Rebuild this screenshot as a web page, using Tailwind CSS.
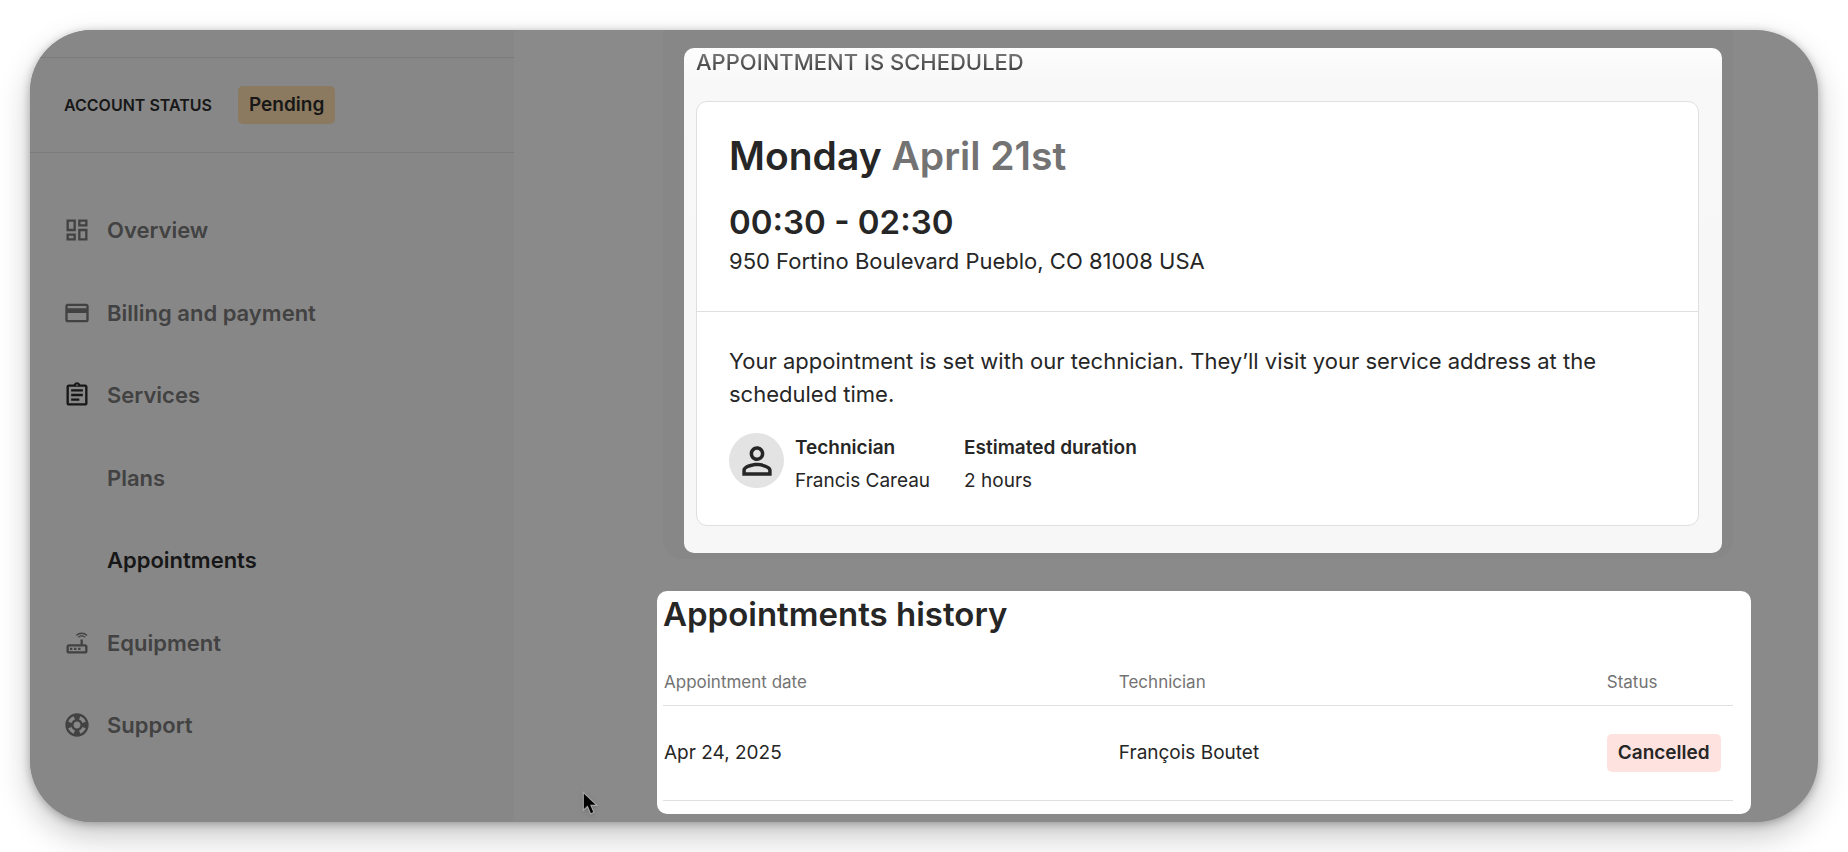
<!DOCTYPE html>
<html lang="en">
<head>
<meta charset="utf-8">
<meta name="viewport" content="width=device-width, initial-scale=1">
<title>Appointments</title>
<script src="https://cdn.jsdelivr.net/npm/@tailwindcss/browser@4"></script>
</head>
<body class="bg-white font-['Inter',sans-serif] text-[#262626]">
<div class="flex min-h-screen p-[30px]">
  <div class="relative flex flex-1 overflow-hidden rounded-[62px] bg-[#8a8a8a] shadow-[0_14px_32px_rgba(0,0,0,0.22),0_2px_10px_rgba(0,0,0,0.28)]">

    <aside class="flex w-[484px] shrink-0 flex-col bg-[#878787] pt-[27px]">
      <div class="flex items-center gap-[26px] border-y border-[#7b7b7b] px-[34px] py-7 text-[#171717]">
        <span class="text-base font-semibold">ACCOUNT STATUS</span>
        <span class="rounded-[5px] bg-[#8b7a60] px-[11px] text-[19px] leading-[38px] font-semibold">Pending</span>
      </div>
      <nav class="flex flex-1 flex-col justify-between px-[33px] pt-[61px] pb-[81px] text-[22px] leading-8 font-semibold text-[#424242]">
        <a href="#" class="flex items-center gap-4">
          <svg class="size-7" viewBox="0 0 24 24" fill="currentColor" aria-hidden="true"><path d="M19 5v2h-4V5h4M9 5v6H5V5h4m10 8v6h-4v-6h4M9 17v2H5v-2h4M21 3h-8v6h8V3zM11 3H3v10h8V3zm10 8h-8v10h8V11zm-10 4H3v6h8v-6z"/></svg>
          Overview
        </a>
        <a href="#" class="flex items-center gap-4">
          <svg class="size-7" viewBox="0 0 24 24" fill="currentColor" aria-hidden="true"><path d="M20 4H4c-1.11 0-1.99.89-1.99 2L2 18c0 1.11.89 2 2 2h16c1.11 0 2-.89 2-2V6c0-1.11-.89-2-2-2zm0 14H4v-6h16v6zm0-10H4V6h16v2z"/></svg>
          Billing and payment
        </a>
        <a href="#" class="flex items-center gap-4">
          <svg class="size-7 text-[#171717]" viewBox="0 0 24 24" fill="currentColor" aria-hidden="true"><path d="M7 15h7v2H7zm0-4h10v2H7zm0-4h10v2H7zm12-4h-4.18C14.4 1.84 13.3 1 12 1c-1.3 0-2.4.84-2.82 2H5c-1.1 0-2 .9-2 2v14c0 1.1.9 2 2 2h14c1.1 0 2-.9 2-2V5c0-1.1-.9-2-2-2zm-7-.25c.41 0 .75.34.75.75s-.34.75-.75.75-.75-.34-.75-.75.34-.75.75-.75zM19 19H5V5h14v14z"/></svg>
          Services
        </a>
        <a href="#" class="pl-11">Plans</a>
        <a href="#" class="pl-11 text-[#171717]" aria-current="page">Appointments</a>
        <a href="#" class="flex items-center gap-4">
          <svg class="size-7" viewBox="0 0 24 24" fill="currentColor" aria-hidden="true"><path d="M20.2 5.9l.8-.8C19.6 3.7 17.8 3 16 3s-3.6.7-5 2.1l.8.8C13 4.8 14.5 4.2 16 4.2s3 .6 4.2 1.7zm-.9.8c-.9-.9-2.1-1.4-3.3-1.4s-2.4.5-3.3 1.4l.8.8c.7-.7 1.6-1 2.5-1 .9 0 1.8.3 2.5 1l.8-.8zM19 13h-2V9h-2v4H5c-1.1 0-2 .9-2 2v4c0 1.1.9 2 2 2h14c1.1 0 2-.9 2-2v-4c0-1.1-.9-2-2-2zm0 6H5v-4h14v4zM6 16h2v2H6zm3.5 0h2v2h-2zm3.5 0h2v2h-2z"/></svg>
          Equipment
        </a>
        <a href="#" class="flex items-center gap-4">
          <svg class="size-7" viewBox="0 0 24 24" fill="currentColor" aria-hidden="true"><path d="M12 2C6.480 2 2 6.480 2 12s4.480 10 10 10 10-4.480 10-10S17.520 2 12 2zm7.460 7.120l-2.780 1.150c-.51-1.360-1.580-2.440-2.950-2.940l1.150-2.780c2.100.8 3.770 2.470 4.580 4.570zM12 15c-1.660 0-3-1.340-3-3s1.340-3 3-3 3 1.340 3 3-1.340 3-3 3zM9.130 4.540l1.170 2.780c-1.380.5-2.470 1.590-2.980 2.970L4.540 9.130c.81-2.110 2.480-3.780 4.590-4.590zM4.540 14.870l2.780-1.150c.51 1.380 1.590 2.460 2.970 2.960l-1.170 2.780c-2.100-.81-3.770-2.480-4.580-4.590zm10.340 4.590l-1.150-2.780c1.370-.51 2.450-1.590 2.950-2.970l2.780 1.170c-.81 2.100-2.480 3.770-4.580 4.580z"/></svg>
          Support
        </a>
      </nav>
    </aside>

    <main class="min-w-0 flex-1">
      <div class="mr-[85px] ml-[149px] rounded-b-[20px] bg-[#878787] pt-[18px] pr-[11px] pb-[6px] pl-[21px]">
        <section class="rounded-[10px] bg-linear-to-b from-[#fdfdfd] via-[#f8f8f8] via-[34px] to-[#f7f7f7] pr-[23px] pb-[27px] pl-3">
          <h2 class="bg-linear-to-b from-[#8a8a8a] to-[#303030] bg-clip-text text-[22px] leading-7 font-medium text-transparent">APPOINTMENT IS SCHEDULED</h2>
          <div class="mt-[25px] rounded-[11px] border border-[#dfdfdf] bg-white">
            <div class="border-b border-[#dfdfdf] px-8 pt-[31px] pb-[33px]">
              <h3 class="text-[39px] leading-[46px] font-semibold">Monday <span class="text-[#737373]">April 21st</span></h3>
              <p class="mt-[23px] text-[33px] leading-10 font-semibold">00:30 - 02:30</p>
              <p class="pt-[3px] text-[22px] leading-[33px]">950 Fortino Boulevard Pueblo, CO 81008 USA</p>
            </div>
            <div class="px-8 pt-[33px] pb-7">
              <p class="text-[22px] leading-[33px]">Your appointment is set with our technician. They’ll visit your service address at the scheduled time.</p>
              <div class="mt-5 flex items-start text-[19px] leading-[33px]">
                <span class="mt-[2px] flex size-[55px] items-center justify-center rounded-full bg-[#e3e3e3]">
                  <svg class="size-11" viewBox="0 0 24 24" fill="currentColor" aria-hidden="true"><path d="M12 5.9c1.16 0 2.1.94 2.1 2.1s-.94 2.1-2.1 2.1S9.9 9.16 9.9 8s.94-2.1 2.1-2.1m0 9c2.97 0 6.1 1.46 6.1 2.1v1.1H5.9V17c0-.64 3.13-2.1 6.1-2.1M12 4C9.79 4 8 5.79 8 8s1.79 4 4 4 4-1.79 4-4-1.79-4-4-4zm0 9c-2.67 0-8 1.34-8 4v3h16v-3c0-2.66-5.33-4-8-4z"/></svg>
                </span>
                <dl class="ml-[11px]"><dt class="font-semibold">Technician</dt><dd>Francis Careau</dd></dl>
                <dl class="ml-[34px]"><dt class="font-semibold">Estimated duration</dt><dd>2 hours</dd></dl>
              </div>
            </div>
          </div>
        </section>
      </div>

      <section class="mt-8 mr-[67px] mb-2 ml-[143px] rounded-[10px] bg-white pt-[3px] pr-[18px] pb-[13px] pl-[6px]">
        <h2 class="text-[33px] leading-10 font-semibold">Appointments history</h2>
        <table class="w-full table-fixed text-left">
          <thead class="text-[17px] leading-6 text-[#737373]">
            <tr class="border-b border-[#dfdfdf]">
              <th class="w-[42.6%] pt-9 pb-[11px] pl-px font-normal" scope="col">Appointment date</th>
              <th class="w-[45.6%] pt-9 pb-[11px] font-normal" scope="col">Technician</th>
              <th class="pt-9 pb-[11px] font-normal" scope="col">Status</th>
            </tr>
          </thead>
          <tbody class="text-[19px] leading-[38px]">
            <tr class="border-b border-[#dfdfdf]">
              <td class="py-7 pl-px">Apr 24, 2025</td>
              <td class="py-7">François Boutet</td>
              <td class="py-7"><span class="block w-fit rounded-[5px] bg-[#fee2df] px-[11px] font-semibold">Cancelled</span></td>
            </tr>
          </tbody>
        </table>
      </section>
    </main>

    <!-- mouse pointer -->
    <svg class="absolute top-[760px] left-[550px] h-7 w-6 drop-shadow" viewBox="0 0 20 24" aria-hidden="true"><path d="M2.500 2v15.500l3.600-3.300 2.700 6.300 3-1.300-2.700-6h5.200z" fill="#000" stroke="#a6a6a6" stroke-width="1"/></svg>
  </div>
</div>
</body>
</html>
